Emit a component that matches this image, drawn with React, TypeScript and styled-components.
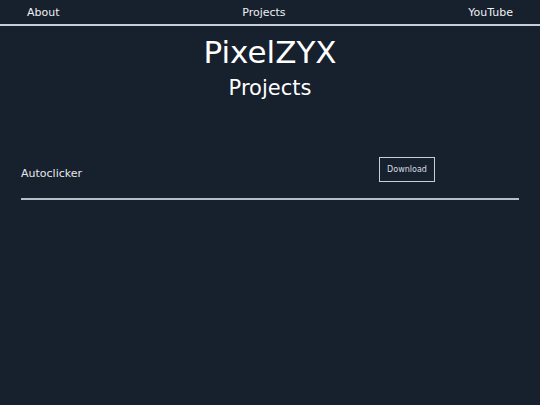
import React from "react";
import styled, { createGlobalStyle } from "styled-components";

const Global = createGlobalStyle`
  html, body { margin: 0; padding: 0; background: #17202d; }
  body { font-family: "DejaVu Sans", "Noto Sans", sans-serif; color: #ffffff; }
  #root { min-height: 405px; background: #17202d; }
`;

const Page = styled.div`
  width: 540px;
  min-height: 405px;
  background: #17202d;
`;

const Nav = styled.nav`
  display: flex;
  justify-content: space-between;
  align-items: center;
  height: 24px;
  padding: 0 27px;
  border-bottom: 2px solid #c9ced6;
`;

const NavLink = styled.a`
  font-size: 11px;
  color: #eef0f3;
  text-decoration: none;
  font-weight: 400;
`;

const Title = styled.h1`
  margin: 6px 0 0;
  text-align: center;
  font-size: 31px;
  font-weight: 400;
  line-height: 40px;
`;

const Subtitle = styled.h2`
  margin: 2px 0 0;
  text-align: center;
  font-size: 21px;
  font-weight: 500;
  line-height: 28px;
`;

const List = styled.div`
  margin: 55px 21px 0;
`;

const Row = styled.div`
  display: grid;
  grid-template-columns: 358px auto;
  align-items: start;
  padding-bottom: 16px;
  border-bottom: 2px solid #b8bec7;
`;

const Name = styled.span`
  font-size: 11px;
  color: #e6e8ec;
  margin-top: 10px;
`;

const Button = styled.button`
  justify-self: start;
  width: 56px;
  height: 25px;
  background: transparent;
  border: 1px solid #c9ced6;
  color: #d8dce2;
  font-family: inherit;
  font-size: 8px;
  padding: 0;
  margin-top: 0;
`;

export default function App() {
  return (
    <Page>
      <Global />
      <Nav>
        <NavLink>About</NavLink>
        <NavLink>Projects</NavLink>
        <NavLink>YouTube</NavLink>
      </Nav>
      <Title>PixelZYX</Title>
      <Subtitle>Projects</Subtitle>
      <List>
        <Row>
          <Name>Autoclicker</Name>
          <Button>Download</Button>
        </Row>
      </List>
    </Page>
  );
}
